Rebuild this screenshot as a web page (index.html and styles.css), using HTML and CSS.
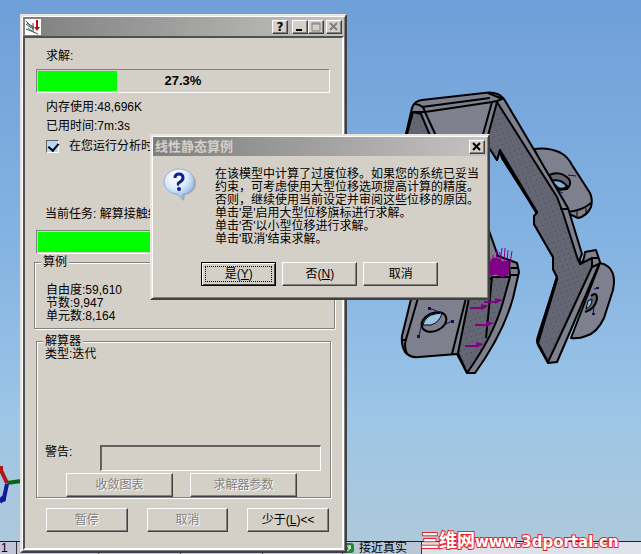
FILE: index.html
```
<!DOCTYPE html>
<html lang="zh-CN">
<head>
	<meta charset="utf-8">
	<title>线性静态算例</title>
	<link rel="stylesheet" href="styles.css">
</head>
<body>
<main class="desktop">
	<svg class="model" viewBox="400 88 220 290" aria-hidden="true">
		<defs>
			<pattern id="mesh" width="5" height="5" patternUnits="userSpaceOnUse" patternTransform="rotate(-20)">
				<rect width="5" height="5" fill="#656673"/>
				<rect x="2" y="2" width="1" height="1" fill="#44454f"/>
			</pattern>
		</defs>
		<g stroke="#000" stroke-width="2" stroke-linejoin="round" fill="#7f808e">
			<!-- rear ears -->
			<path d="M534 149 Q549 147 561 153 Q568 157 572 165 L590 193 Q593 200 591 207 Q587 216 578 218 L567 213Z"/>
			<path d="M567 212 Q582 211 591 203" fill="none"/>
			<path d="M577 211v6M586 208v6" fill="none" stroke-width="1"/>
			<path d="M549 175 Q560 170 569 179 Q572 184 567 189 L558 190Z" fill="#666775"/>
			<path d="M551 181 Q560 178 567 186 Q564 190 558 188Z" fill="#83b1df"/>
			<path d="M600 263 Q610 265 613 274 Q615 280 613 290 L604 318 Q597 333 586 336 Q579 339 571 338Z"/>
			<path d="M591 296 Q597 291 597 299 Q595 309 585 312" fill="#666775"/>
			<path d="M588 301 L592 299 Q592 306 586 309Z" fill="#8fbbe4" stroke-width="1"/>
			<!-- main frame -->
			<path d="M405 138 L412 108 Q414 101 422 100 L484 93 Q498 91 504 99 L533 148 L568 208 L582 254 Q578 262 581 263 Q584 261 585 252 L596 250 L600 262 L557 362 L548 363 L538 345 Q536 341 538 336 L557 277 L553 269 L553 257 L534 224 L534 216 L537 213 L502 158 L500 150 L497 160 L488 145 L482 133Z"/>
			<path d="M425 112 L492 102 L482 138 L437 138Z"/>
			<path d="M413 112 L421 114 L431 138 L406 138Z" fill="url(#mesh)"/>
			<path d="M413 112 L425 112 M415 104 Q424 105 425 112 M422 107 L490 98 M488 93 Q497 97 504 99 M492 102 L497 101 L504 98" fill="none"/>
			<path d="M497 102 L557 197 L563 213 L577 257 L580 264 L592 258 L592 267 L548 362 L538 343 L557 277 L553 269 L553 257 L534 224 L534 216 L537 213 L502 158 L500 150 L497 160 L486 143Z" fill="url(#mesh)"/>
			<path d="M500 151 L537 213 M557 278 L538 341" stroke-width="3" fill="none"/>
			<path d="M560 209 L568 209 M592 258 L599 258 M592 267 L599 264" fill="none"/>
			<!-- lower left bracket -->
			<path d="M412 295 L402 336 Q401 345 405 352 Q410 358 419 357 L457 354 L467 373 L475 373 Q503 334 513 298 L519 272 L517 263 L509 260 L498 256 L488 228 L480 290Z"/>
			<path d="M469 298 L458 353 L467 373 Q494 335 503 302 L510 277 L492 277 L480 290Z" fill="url(#mesh)"/>
			<path d="M466 298 L452 354 M418 298 L407 336 Q403 345 407 354 M492 277 L486 338 M402 340h5 M509 260 L510 277 M511 268h8 M511 275h7" fill="none"/>
			<ellipse cx="434" cy="322" rx="13" ry="9" transform="rotate(-25 434 322)"/>
			<path d="M423 325 Q425 316 435 314 L442 313 Q440 322 431 325Z" fill="#9cc5e5" stroke-width="1"/>
		</g>
		<g class="fixtures" fill="none" stroke="#12125c">
			<path d="M429 308l13 5M419 336l2-9M452 321l-8 4M568 175l8 1M558 191l5 2M594 289l5-1M593 315l1-9"/>
			<path d="M428 307h3v3h-3zM417 335h3v3h-3zM451 320h3v3h-3zM596 287h3v2h-3zM592 313h3v2h-3z" fill="#12125c" stroke="none"/>
		</g>
		<g class="loads" stroke="#810087" fill="#810087">
			<path d="M488 264l6-6 5 1 4 3 6-1-1 14-6 2-6-3-8 2z"/>
			<path d="M493 263v-8M496 262l1-12M500 262l2-14M504 263l1-15M507 263l1-13M510 264l2-13M502 258l-3-6M489 258l5 3" fill="none"/>
			<path d="M470 308h12M484 302h12M475 325h12M465 346h12" stroke-width="2"/>
			<path d="M481 304l8 2-8 4zM495 298l8 2-8 4zM486 321l8 2-8 4zM476 342l8 2-8 4z" stroke="none"/>
		</g>
	</svg>

	<svg class="triad" viewBox="0 0 24 50" aria-hidden="true">
		<path d="M0 8L7 23" stroke="#b01818" stroke-width="4"/>
		<path d="M7 23l14-2" stroke="#106018" stroke-width="4"/>
		<path d="M7 24L4 38l-4 4" stroke="#1018a0" stroke-width="4" fill="none"/>
		<circle cx="3" cy="39" r="3" fill="#1018a0"/>
		<path d="M0 8h3" stroke="#b01818" stroke-width="4"/>
	</svg>

	<nav class="tabs">
		<a href="#" class="tab tab-first">1</a>
		<a href="#" class="tab">算例 2</a>
		<a href="#" class="tab">Refinned</a>
		<a href="#" class="tab">算例 3</a>
		<a href="#" class="tab tab-wide">接近真实</a>
		<a href="#" class="tab tab-active">
			<svg width="10" height="10" viewBox="0 0 10 10" aria-hidden="true">
				<rect width="10" height="10" rx="3" fill="#1e8a32"/>
				<path d="M2 3h5L4 5h3L3 8" fill="none" stroke="#fff"/>
			</svg>
			接近真实
		</a>
	</nav>
	<div class="watermark"><span>三维网</span>www.3dportal.cn</div>

	<section class="window solver">
		<header class="titlebar">
			<svg class="app-icon" width="16" height="16" viewBox="0 0 16 16" aria-hidden="true">
				<rect width="16" height="16" fill="#fff"/>
				<path d="M1 2l4 4 4 2M1 5l4 3 4 2M1 10l5 2 7 3M8 4v9" fill="none" stroke="#4a4a4a"/>
				<path d="M2 4l6 5M3 9l4 3" stroke="#2c8a50"/>
				<path d="M11 1h2v7h2l-3 4-3-4h2z" fill="#b81414"/>
			</svg>
			<div class="title"></div>
			<button class="caption help" aria-label="帮助">?</button>
			<button class="caption" aria-label="最小化"><svg width="12" height="10"><path d="M2 8h6" stroke="#000" stroke-width="2"/></svg></button>
			<button class="caption" aria-label="最大化" disabled><svg width="12" height="10"><path d="M2 1h8v8h-8z" fill="none" stroke="#808080"/><path d="M2 2h8" stroke="#808080"/></svg></button>
			<button class="caption close" aria-label="关闭" disabled><svg width="12" height="10"><path d="M2 1l7 7M9 1l-7 7" stroke="#808080" stroke-width="2"/></svg></button>
		</header>
		<div class="solver-body">
			<p class="label">求解:</p>
			<div class="progress" role="progressbar" aria-valuenow="27.3">
				<div class="bar" style="width:27.3%"></div>
				<strong>27.3%</strong>
			</div>
			<ul class="stats">
				<li>内存使用:48,696K</li>
				<li>已用时间:7m:3s</li>
			</ul>
			<label class="check"><input type="checkbox" checked> 在您运行分析时</label>
			<p class="label task">当前任务: 解算接触约束</p>
			<div class="progress task-progress" role="progressbar" aria-valuenow="60">
				<div class="bar" style="width:60%"></div>
			</div>
			<fieldset class="group study">
				<legend>算例</legend>
				<p>自由度:59,610</p>
				<p>节数:9,947</p>
				<p>单元数:8,164</p>
			</fieldset>
			<fieldset class="group engine">
				<legend>解算器</legend>
				<p>类型:迭代</p>
				<div class="warning">
					<label for="warning">警告:</label>
					<input type="text" id="warning" readonly>
				</div>
				<div class="group-buttons">
					<button class="btn" disabled>收敛图表</button>
					<button class="btn" disabled>求解器参数</button>
				</div>
			</fieldset>
			<div class="solver-buttons">
				<button class="btn" disabled>暂停</button>
				<button class="btn" disabled>取消</button>
				<button class="btn">少于(<u>L</u>)&lt;&lt;</button>
			</div>
		</div>
	</section>

	<section class="window message" role="dialog" aria-labelledby="message-title">
		<header class="titlebar">
			<h1 class="title" id="message-title">线性静态算例</h1>
			<button class="caption close" aria-label="关闭"><svg width="12" height="10"><path d="M2 1l7 7M9 1l-7 7" stroke="#000" stroke-width="2"/></svg></button>
		</header>
		<div class="message-body">
			<svg class="question" width="34" height="34" viewBox="0 0 34 34" aria-hidden="true">
				<defs>
					<radialGradient id="bubble" cx="40%" cy="25%" r="75%">
						<stop offset="0" stop-color="#fff"/>
						<stop offset=".5" stop-color="#dcebfb"/>
						<stop offset="1" stop-color="#86b3e8"/>
					</radialGradient>
				</defs>
				<path d="M18 3C27 3 33 8 33 15S28 26 22 27L21 33 15 27C8 26 3 21 3 15S9 3 18 3Z" fill="#8f8d88" opacity=".6"/>
				<path d="M16 1C25 1 31 6 31 14S26 25 20 26L20 32 14 26C6 25 1 20 1 14S7 1 16 1Z" fill="url(#bubble)" stroke="#8fb2da"/>
				<path d="M12 10Q12 6 16 6T20 10Q20 12 17 14T16 17" fill="none" stroke="#10208c" stroke-width="3"/>
				<circle cx="16" cy="21" r="2" fill="#10208c"/>
			</svg>
			<p>在该模型中计算了过度位移。如果您的系统已妥当<br>约束，可考虑使用大型位移选项提高计算的精度。<br>否则，继续使用当前设定并审阅这些位移的原因。<br>单击'是'启用大型位移旗标进行求解。<br>单击'否'以小型位移进行求解。<br>单击'取消'结束求解。</p>
		</div>
		<div class="message-buttons">
			<button class="btn default">是(<u>Y</u>)</button>
			<button class="btn">否(<u>N</u>)</button>
			<button class="btn">取消</button>
		</div>
	</section>
</main>
</body>
</html>
```
FILE: styles.css
```
* {
	box-sizing: border-box;
}
body {
	margin: 0;
	font: 12px/16px "Liberation Sans", "Noto Sans CJK SC", sans-serif;
	color: #000;
}
p, ul, h1 {
	margin: 0;
	padding: 0;
}
.desktop {
	position: relative;
	display: flex;
	flex-direction: column;
	justify-content: flex-end;
	min-height: 100vh;
	overflow: hidden;
	background: linear-gradient(#6f9fd8, #85b3e2 45%, #9cc5e6 75%, #afc9da);
}

/* drawing area */
.model {
	position: absolute;
	left: 400px;
	top: 88px;
	width: 220px;
	height: 290px;
}
.triad {
	position: absolute;
	left: 0;
	top: 460px;
	width: 24px;
	height: 50px;
}
.watermark {
	position: absolute;
	left: 421px;
	bottom: 2px;
	font: bold 15px/20px "DejaVu Sans", "Noto Sans CJK SC", sans-serif;
	color: #fff;
	-webkit-text-stroke: 2px #e8232b;
	paint-order: stroke fill;
	white-space: nowrap;
}
.watermark span {
	font-size: 18px;
}
.tabs {
	display: flex;
	background: #dfe1ea;
	border-top: 1px solid #222;
}
.tab {
	flex: none;
	width: 82px;
	padding-left: 20px;
	font-size: 12px;
	line-height: 12px;
	height: 12px;
	color: #000;
	text-decoration: none;
	background: #c3c5d8;
	border-right: 1px solid #333;
}
.tab-first {
	width: 17px;
	padding-left: 1px;
}
.tab-wide {
	width: 80px;
}
.tab-active {
	display: flex;
	gap: 5px;
	width: 79px;
	padding-left: 1px;
	background: #b9c6d6;
}
.tab-active svg {
	margin-top: 1px;
}

/* windows */
.window {
	position: absolute;
	padding: 1px;
	background: #d4d0c8;
	border: 2px solid;
	border-color: #e8e5df #404040 #404040 #e8e5df;
	box-shadow: inset 1px 1px #fff, inset -1px -1px #808080;
}
.solver {
	left: 20px;
	top: 14px;
	width: 51%;
}
.message {
	left: 150px;
	top: 134px;
	width: 53%;
}
.titlebar {
	display: flex;
	align-items: center;
	height: 19px;
	padding: 0 2px;
	background: linear-gradient(90deg, #7f7f7f, #c4c3c1);
}
.title {
	flex: 1;
	font-size: 13px;
	line-height: 18px;
	font-weight: bold;
	color: #d4d0c8;
}
.caption {
	display: flex;
	align-items: center;
	justify-content: center;
	width: 16px;
	height: 14px;
	padding: 0;
	background: #d4d0c8;
	border: 1px solid;
	border-color: #fff #404040 #404040 #fff;
	box-shadow: inset -1px -1px #808080;
}
.caption svg {
	flex: none;
}
.help {
	margin-right: 4px;
	font: bold 12px/12px "DejaVu Sans", sans-serif;
}
.close {
	margin-left: 2px;
}
.btn {
	height: 24px;
	padding: 0;
	font: inherit;
	color: #000;
	background: #d4d0c8;
	border: 1px solid;
	border-color: #fff #404040 #404040 #fff;
	box-shadow: inset -1px -1px #808080;
}
.btn:disabled {
	color: #808080;
	text-shadow: 1px 1px #fff;
}

/* solver window */
.solver-body {
	padding: 10px 0 16px;
	border: 2px solid;
	border-color: #505050 #fff #fff #505050;
}
.label {
	padding-left: 21px;
}
.task {
	margin-top: 50px;
	padding-left: 20px;
}
.progress {
	position: relative;
	height: 24px;
	margin: 5px 12px 5px 11px;
	padding: 1px;
	border: 1px solid;
	border-color: #808080 #fff #fff #808080;
}
.task-progress {
	margin: 8px 12px 1px 11px;
}
.bar {
	height: 100%;
	background: #0f0;
}
.progress strong {
	position: absolute;
	inset: 0;
	font-size: 13px;
	line-height: 22px;
	text-align: center;
}
.stats {
	padding-left: 21px;
	line-height: 19px;
	list-style: none;
}
.check {
	display: flex;
	align-items: center;
	gap: 10px;
	height: 20px;
	padding-left: 21px;
}
.check input {
	position: relative;
	appearance: none;
	width: 13px;
	height: 13px;
	margin: 0;
	background: #b5d6f5;
	border: 1px solid;
	border-color: #606060 #fff #fff #606060;
}
.check input:checked::after {
	content: "";
	position: absolute;
	left: 3px;
	top: 0;
	width: 5px;
	height: 8px;
	border: solid #000;
	border-width: 0 2px 2px 0;
	transform: rotate(40deg);
}
.group {
	min-width: 0;
	padding: 0;
	line-height: 13px;
	border: 1px solid #808080;
	box-shadow: 1px 1px #fff, inset 1px 1px #fff;
}
.group legend {
	margin-left: 6px;
	padding: 0 2px;
	line-height: 14px;
	background: #d4d0c8;
}
.study {
	margin: 0 7px 0 9px;
	padding: 15px 0 5px;
}
.study p {
	padding-left: 11px;
}
.engine {
	margin: 5px 11px 0;
}
.engine p {
	padding-left: 8px;
}
.warning {
	display: flex;
	margin: 84px 9px 0 8px;
}
.warning label {
	width: 55px;
	line-height: 14px;
	flex: none;
}
.warning input {
	flex: 1;
	min-width: 0;
	height: 26px;
	background: #d4d0c8;
	border: 2px solid;
	border-color: #606060 #fff #fff #606060;
	border-width: 2px 1px 1px 2px;
}
.group-buttons {
	display: flex;
	gap: 17px;
	margin-top: 2px;
	padding: 0 33px 0 29px;
}
.solver-buttons {
	display: flex;
	gap: 19px;
	margin-top: 10px;
	padding: 0 13px 0 21px;
}
.group-buttons .btn, .solver-buttons .btn {
	flex: 1;
}

/* message box */
.message-body {
	display: flex;
	gap: 18px;
	padding: 12px 0 0 10px;
}
.question {
	flex: none;
}
.message-body p {
	line-height: 13px;
	white-space: nowrap;
}
.message-buttons {
	display: flex;
	justify-content: center;
	gap: 6px;
	padding: 16px 0 11px;
}
.message-buttons .btn {
	width: 75px;
}
.default {
	border-color: #000;
	outline: 1px dotted #000;
	outline-offset: -5px;
	box-shadow: inset 1px 1px #fff, inset -1px -1px #404040;
}
```
